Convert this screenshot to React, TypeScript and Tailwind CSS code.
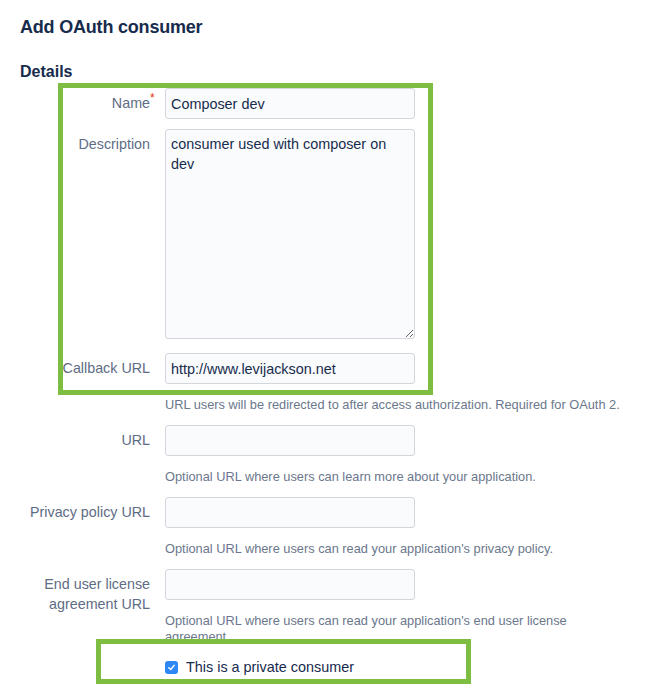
import React from "react";

const font = { fontFamily: '"Liberation Sans", Arial, Helvetica, sans-serif' };

function Label({ children }: { children: React.ReactNode }) {
  return (
    <div className="w-[130px] shrink-0 text-right pt-[5px] text-[14.3px] leading-[20px] text-[#5e6c84]">
      {children}
    </div>
  );
}

function Help({ children }: { children: React.ReactNode }) {
  return (
    <div className="w-[458px] mt-[13px] mb-[12px] text-[12.8px] leading-[16px] text-[#6b778c]">
      {children}
    </div>
  );
}

const inputCls =
  "block w-[250px] h-[31px] rounded-[3px] border border-[#d3d6db] bg-[#fafbfc] px-[5px] text-[14.4px] leading-[20px] text-[#172b4d] outline-none";

export default function App() {
  return (
    <div className="relative min-h-[688px] bg-white px-[20px] pt-[15px]" style={font}>
      <h2 className="text-[18px] leading-[24px] font-bold tracking-[-0.2px] text-[#172b4d]">
        Add OAuth consumer
      </h2>
      <h3 className="mt-[23px] text-[16px] leading-[20px] font-bold text-[#172b4d]">Details</h3>

      <div className="mt-[6px] flex flex-col">
        {/* Name */}
        <div className="flex gap-[15px] mb-[10px]">
          <Label>
            <span className="relative">
              Name
              <span className="absolute left-full top-[-7px] text-[12px] text-[#de350b]">*</span>
            </span>
          </Label>
          <div>
            <input className={inputCls} defaultValue="Composer dev" />
          </div>
        </div>

        {/* Description */}
        <div className="flex gap-[15px] mb-[14px]">
          <Label>Description</Label>
          <div>
            <textarea
              className="block w-[250px] h-[210px] rounded-[3px] border border-[#d3d6db] bg-[#fafbfc] px-[5px] py-[4px] text-[14.4px] leading-[20px] text-[#172b4d] outline-none"
              defaultValue="consumer used with composer on dev"
            />
          </div>
        </div>

        {/* Callback URL */}
        <div className="flex gap-[15px]">
          <Label>Callback URL</Label>
          <div>
            <input className={inputCls} defaultValue="http://www.levijackson.net" />
            <Help>URL users will be redirected to after access authorization. Required for OAuth 2.</Help>
          </div>
        </div>

        {/* URL */}
        <div className="flex gap-[15px]">
          <Label>URL</Label>
          <div>
            <input className={inputCls} defaultValue="" />
            <Help>Optional URL where users can learn more about your application.</Help>
          </div>
        </div>

        {/* Privacy */}
        <div className="flex gap-[15px]">
          <Label>Privacy policy URL</Label>
          <div>
            <input className={inputCls} defaultValue="" />
            <Help>Optional URL where users can read your application's privacy policy.</Help>
          </div>
        </div>

        {/* EULA */}
        <div className="flex gap-[15px]">
          <Label>
            End user license
            <br />
            agreement URL
          </Label>
          <div>
            <input className={inputCls} defaultValue="" />
            <div className="w-[458px] mt-[13px] text-[12.8px] leading-[16px] text-[#6b778c]">
              Optional URL where users can read your application's end user license agreement
            </div>
          </div>
        </div>

        {/* Checkbox */}
        <div className="flex gap-[15px] mt-[12px]">
          <div className="w-[130px] shrink-0" />
          <label className="flex items-center gap-[8px] text-[14.4px] leading-[20px] text-[#172b4d]">
            <span className="flex h-[13px] w-[13px] items-center justify-center rounded-[3px] bg-[#2f86f6]">
              <svg width="9" height="9" viewBox="0 0 10 10" fill="none">
                <path d="M2 5.2 L4.1 7.3 L8 2.6" stroke="white" strokeWidth="1.6" strokeLinecap="round" strokeLinejoin="round" />
              </svg>
            </span>
            This is a private consumer
          </label>
        </div>
      </div>

      {/* Annotation overlays */}
      <div className="pointer-events-none absolute left-[58px] top-[83px] h-[312px] w-[375px] border-[5px] border-[#7cbd42]" />
      <div className="pointer-events-none absolute left-[96px] top-[639px] h-[45px] w-[375px] border-[5px] border-[#7cbd42]" />
    </div>
  );
}
